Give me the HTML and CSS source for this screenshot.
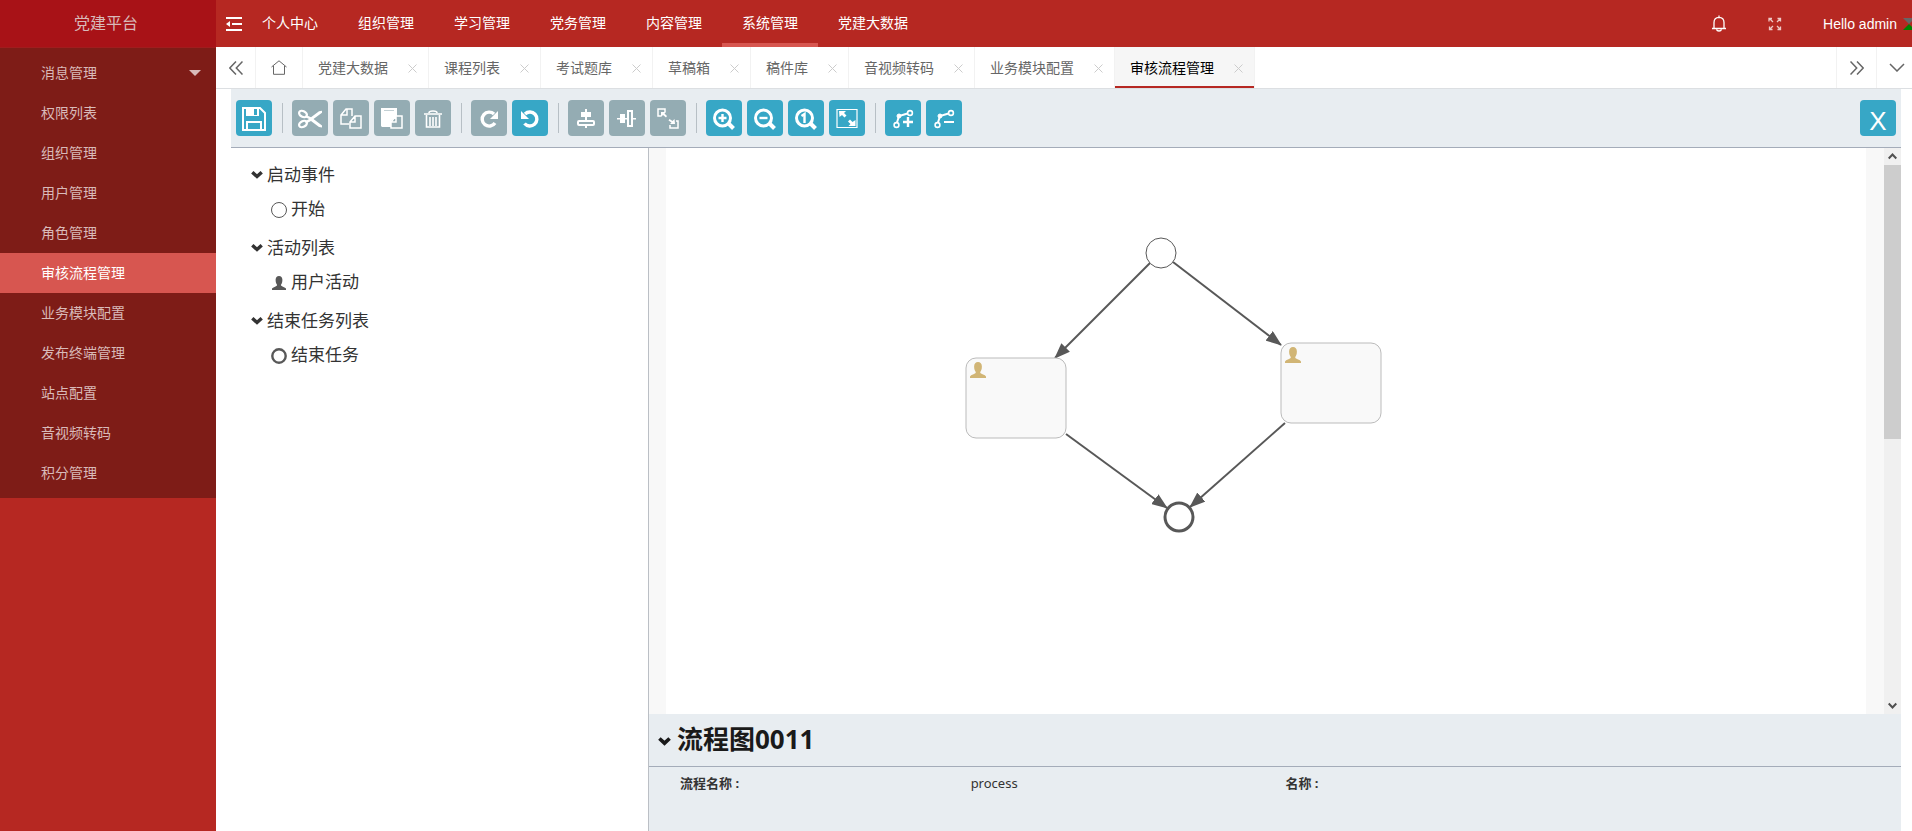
FILE: index.html
```html
<!DOCTYPE html>
<html lang="zh-CN">
<head>
<meta charset="utf-8">
<title>党建平台</title>
<link rel="stylesheet" href="styles.css">
</head>
<body>
<svg class="defs" aria-hidden="true">
  <defs>
    <symbol id="user" viewBox="0 0 16 16"><path d="M0 16v-1.600q.3-1 4-2.400 1.800-.7 1.800-1.400 0-.8-.8-1.800-.9-1.600-.9-4.400Q4.300.200 8 0q3.700.200 3.900 4.400 0 2.800-.9 4.400-.8 1-.8 1.800 0 .7 1.800 1.400 3.700 1.400 4 2.400V16z"/></symbol>
    <symbol id="chevron" viewBox="0 0 12 9"><path d="M1.300 2.200 6 6.500 10.700 2.200" fill="none" stroke="currentColor" stroke-width="3.400"/></symbol>
    <symbol id="cross" viewBox="0 0 9 9"><path d="M.5.5l8 8M8.500.5l-8 8" fill="none" stroke="currentColor"/></symbol>
  </defs>
</svg>
<div class="app">
  <aside class="sidebar">
    <div class="logo">党建平台</div>
    <nav class="menu">
      <a href="#" class="has-sub">消息管理<span class="caret"></span></a>
      <a href="#">权限列表</a>
      <a href="#">组织管理</a>
      <a href="#">用户管理</a>
      <a href="#">角色管理</a>
      <a href="#" class="active">审核流程管理</a>
      <a href="#">业务模块配置</a>
      <a href="#">发布终端管理</a>
      <a href="#">站点配置</a>
      <a href="#">音视频转码</a>
      <a href="#">积分管理</a>
    </nav>
  </aside>
  <div class="body">
    <header class="topbar">
      <button class="fold" aria-label="收起菜单"><svg width="16" height="14" viewBox="0 0 16 14"><path d="M0 1h16M6 7h10M0 13h16" stroke="currentColor" stroke-width="2"/><path d="M0 7l4-3v6z" fill="currentColor"/></svg></button>
      <nav class="topnav">
        <a href="#">个人中心</a><a href="#">组织管理</a><a href="#">学习管理</a><a href="#">党务管理</a><a href="#">内容管理</a><a href="#" class="active">系统管理</a><a href="#">党建大数据</a>
      </nav>
      <div class="tools">
        <button aria-label="消息"><svg width="16" height="18" viewBox="0 0 16 18"><path d="M1 13.500h14M3 13V7.500Q3 2.500 8 2.300q5 .2 5 5.200V13M8 .5v2M5.500 14.500Q6 16 8 16t2.500-1.500" fill="none" stroke="currentColor" stroke-width="1.300"/></svg></button>
        <button aria-label="全屏"><svg width="14" height="14" viewBox="0 0 14 14"><path d="M1 4.500V1.500h3M1.500 1.500l3.500 3.500M9.500 1.500h3v3M12.500 1.500L9 5M1.500 9.500v3h3M1.500 12.500L5 9M9.500 12.500h3v-3M12.500 12.500L9 9" fill="none" stroke="#efc8c6" stroke-width="1.300"/></svg></button>
        <a href="#" class="account">Hello admin</a>
        <svg class="status" width="9" height="12" viewBox="0 0 9 12"><path d="M0 0h9v3L6 6z" fill="#666"/><path d="M0 12L6 6l3 3v3z" fill="#008000"/></svg>
      </div>
    </header>
    <div class="tabs">
      <button class="step" aria-label="向左"><svg width="14" height="14" viewBox="0 0 14 14"><path d="M7 .5L.8 7 7 13.500M13.500.5L7.300 7l6.200 6.500" fill="none" stroke="currentColor" stroke-width="1.500"/></svg></button>
      <button class="home" aria-label="首页"><svg width="16" height="15" viewBox="0 0 16 15"><path d="M.5 7L8 .8 15.500 7M2.500 6v8.300h11V6" fill="none" stroke="currentColor"/></svg></button>
      <div class="tab"><a href="#">党建大数据</a><button aria-label="关闭"><svg><use href="#cross"/></svg></button></div>
      <div class="tab"><a href="#">课程列表</a><button aria-label="关闭"><svg><use href="#cross"/></svg></button></div>
      <div class="tab"><a href="#">考试题库</a><button aria-label="关闭"><svg><use href="#cross"/></svg></button></div>
      <div class="tab"><a href="#">草稿箱</a><button aria-label="关闭"><svg><use href="#cross"/></svg></button></div>
      <div class="tab"><a href="#">稿件库</a><button aria-label="关闭"><svg><use href="#cross"/></svg></button></div>
      <div class="tab"><a href="#">音视频转码</a><button aria-label="关闭"><svg><use href="#cross"/></svg></button></div>
      <div class="tab"><a href="#">业务模块配置</a><button aria-label="关闭"><svg><use href="#cross"/></svg></button></div>
      <div class="tab active"><a href="#">审核流程管理</a><button aria-label="关闭"><svg><use href="#cross"/></svg></button></div>
      <button class="step right" aria-label="向右"><svg width="14" height="14" viewBox="0 0 14 14"><path d="M.5.5L6.700 7 .5 13.500M7 .5L13.200 7 7 13.500" fill="none" stroke="currentColor" stroke-width="1.500"/></svg></button>
      <button class="step last" aria-label="更多"><svg width="16" height="9" viewBox="0 0 16 9"><path d="M1 1l7 7 7-7" fill="none" stroke="currentColor" stroke-width="1.500"/></svg></button>
    </div>
    <main class="editor">
      <div class="toolbar">
        <button aria-label="保存"><svg viewBox="0 0 36 36"><path d="M7 8h17l5 5v17H7z" fill="none" stroke="#fff" stroke-width="2"/><path d="M10 7h13v9H10z" fill="#fff"/><path d="M18 9h3v6h-3z" fill="#37a7c6"/><path d="M11 30v-8h14v8" fill="none" stroke="#fff" stroke-width="2"/></svg></button>
        <i></i>
        <button class="off" aria-label="剪切"><svg viewBox="0 0 36 36"><g fill="none" stroke="#fff" stroke-width="2.200"><ellipse cx="11" cy="14" rx="4.200" ry="2.800" transform="rotate(28 11 14)"/><ellipse cx="11" cy="24" rx="4.200" ry="2.800" transform="rotate(-28 11 24)"/></g><path d="M14 15l5 2.300 8-6 3-.5v2L21.500 19l8.500 6.500v2l-3-.5-8-6-5 2.500-1-2 4-2.500-4-2z" fill="#fff"/></svg></button>
        <button class="off" aria-label="复制"><svg viewBox="0 0 36 36" fill="none" stroke="#fff" stroke-width="1.500"><path d="M16 24H8v-9l5-6h6v7M14 9v6H8M17 22l5-6h6v12H17zM22 16v6h-5"/></svg></button>
        <button class="off" aria-label="粘贴"><svg viewBox="0 0 36 36"><path d="M7 8h16v8l-6 5v6H8l-1-1z" fill="#fff"/><path d="M10 10.500h10" stroke="#c3d0d4"/><path d="M17 22l5-6h6v12H17zM22 16v6h-5" fill="#94acb3" stroke="#fff" stroke-width="1.500"/></svg></button>
        <button class="off" aria-label="删除"><svg viewBox="0 0 36 36" fill="none" stroke="#fff" stroke-width="1.600"><path d="M9 14h18M14 13q0-2 4-2t4 2M11.500 15v12h13V15M15 17v9M18 17v9M21 17v9"/></svg></button>
        <i></i>
        <button class="off" aria-label="重做"><svg viewBox="0 0 36 36"><path d="M24 23a7 7 0 1 1-1-9" fill="none" stroke="#fff" stroke-width="3.400"/><path d="M27 11v8h-8z" fill="#fff"/></svg></button>
        <button aria-label="撤销"><svg viewBox="0 0 36 36"><path d="M12.500 23.500a7 7 0 1 0 .5-9.500" fill="none" stroke="#fff" stroke-width="3.400"/><path d="M9 11v8h8z" fill="#fff"/></svg></button>
        <i></i>
        <button class="off" aria-label="垂直对齐"><svg viewBox="0 0 36 36"><path d="M17 9h2v19h-2zM13 12h10v5H13z" fill="#fff"/><rect x="10" y="21" width="16" height="4" rx="1" fill="#94acb3" stroke="#fff" stroke-width="2"/></svg></button>
        <button class="off" aria-label="水平对齐"><svg viewBox="0 0 36 36"><path d="M8 18h19v1.500H8zM11 14h5v9h-5z" fill="#fff"/><rect x="19" y="11" width="4" height="15" fill="#94acb3" stroke="#fff" stroke-width="2"/></svg></button>
        <button class="off" aria-label="同尺寸"><svg viewBox="0 0 36 36"><path d="M11 16H8V9h7v3M26 21h2v7h-8v-3" fill="none" stroke="#fff" stroke-width="1.500"/><path d="M11 12h5l-1.500 1.500L17 16l-1 1.500-3-2.500-2 2zM25 24h-5l1.500-1.500-3-2 1-1.500 3 2 2-2z" fill="#fff"/></svg></button>
        <i></i>
        <button aria-label="放大"><svg viewBox="0 0 36 36" fill="none" stroke="#fff"><circle cx="16.500" cy="18" r="8" stroke-width="3"/><path d="M22.500 23.500l5 5" stroke-width="4"/><path d="M12.500 18h8M16.500 14v8" stroke-width="2.400"/></svg></button>
        <button aria-label="缩小"><svg viewBox="0 0 36 36" fill="none" stroke="#fff"><circle cx="16.500" cy="18" r="8" stroke-width="3"/><path d="M22.500 23.500l5 5" stroke-width="4"/><path d="M12.500 18h8" stroke-width="2.400"/></svg></button>
        <button aria-label="实际大小"><svg viewBox="0 0 36 36" fill="none" stroke="#fff"><circle cx="16.500" cy="18" r="8" stroke-width="3"/><path d="M22.500 23.500l5 5" stroke-width="4"/><path d="M13.500 16l3-2v9" stroke-width="2.400"/></svg></button>
        <button aria-label="适应窗口"><svg viewBox="0 0 36 36"><path d="M8 9.500h20v18H8z" fill="none" stroke="#fff" stroke-width="1.200"/><path d="M10 11h7l-2 2 2.500 2.500-2 2L13 15l-2.500 2zM26.500 26h-7l2-2-2.500-2.500 2-2 2.500 2.500 3-2z" fill="#fff"/></svg></button>
        <i></i>
        <button aria-label="添加拐点"><svg viewBox="0 0 36 36" fill="none" stroke="#fff"><circle cx="11.500" cy="25" r="2.400" stroke-width="1.600"/><circle cx="25" cy="13" r="2.400" stroke-width="1.600"/><path d="M12 22.500L14 16l8.500-2.500" stroke-width="2"/><circle cx="14" cy="16" r="2" fill="#fff"/><path d="M18 22h10M23 17v10" stroke-width="2.400"/></svg></button>
        <button aria-label="删除拐点"><svg viewBox="0 0 36 36" fill="none" stroke="#fff"><circle cx="11.500" cy="25" r="2.400" stroke-width="1.600"/><circle cx="25" cy="13" r="2.400" stroke-width="1.600"/><path d="M12 22.500L14 16l8.500-2.500" stroke-width="2"/><circle cx="14" cy="16" r="2" fill="#fff"/><path d="M18 22h10" stroke-width="2"/></svg></button>
        <button class="close">X</button>
      </div>
      <div class="work">
        <section class="palette">
          <h2><svg><use href="#chevron"/></svg>启动事件</h2>
          <p><svg viewBox="0 0 16 16"><circle cx="8" cy="8" r="7.500" fill="none" stroke="#585858"/></svg>开始</p>
          <h2><svg><use href="#chevron"/></svg>活动列表</h2>
          <p><svg class="person"><use href="#user"/></svg>用户活动</p>
          <h2><svg><use href="#chevron"/></svg>结束任务列表</h2>
          <p><svg viewBox="0 0 16 16"><circle cx="8" cy="8" r="6.700" fill="none" stroke="#585858" stroke-width="2.400"/></svg>结束任务</p>
        </section>
        <section class="stage">
          <div class="canvas">
            <div class="sheet">
              <svg class="flow" width="600" height="400" viewBox="0 0 600 400">
                <defs><marker id="arrow" viewBox="0 0 16 12" refX="15" refY="6" markerWidth="16" markerHeight="12" markerUnits="userSpaceOnUse" orient="auto"><path d="M0 0l16 6-16 6z" fill="#585858"/></marker></defs>
                <g fill="none" stroke="#585858" stroke-width="2">
                  <path d="M484 115L389 210" marker-end="url(#arrow)"/>
                  <path d="M507 114L615 197" marker-end="url(#arrow)"/>
                  <path d="M400 286L501 360" marker-end="url(#arrow)"/>
                  <path d="M619 275L524 359" marker-end="url(#arrow)"/>
                </g>
                <circle cx="495" cy="105" r="15" fill="#fff" stroke="#585858"/>
                <circle cx="513" cy="369" r="14" fill="#fff" stroke="#585858" stroke-width="3"/>
                <g fill="#f9f9f9" stroke="#bbb"><rect x="300" y="210" width="100" height="80" rx="10"/><rect x="615" y="195" width="100" height="80" rx="10"/></g>
                <g fill="#d1b575"><use href="#user" x="304" y="214" width="16" height="16"/><use href="#user" x="619" y="199" width="16" height="16"/></g>
              </svg>
            </div>
            <div class="scroll"><svg width="9" height="17" viewBox="0 0 9 17"><path d="M.7 10.500l3.800-4 3.800 4" fill="none" stroke="#505050" stroke-width="2"/></svg><span></span><svg width="9" height="17" viewBox="0 0 9 17"><path d="M.7 6.500l3.800 4 3.800-4" fill="none" stroke="#505050" stroke-width="2"/></svg></div>
          </div>
          <div class="props">
            <h1><svg><use href="#chevron"/></svg>流程图0011</h1>
            <dl><dt>流程名称 :</dt><dd>process</dd><dt>名称 :</dt><dd></dd></dl>
          </div>
        </section>
      </div>
    </main>
  </div>
</div>
</body>
</html>
```

FILE: styles.css
```css
* { box-sizing: border-box; }
body {
  margin: 0;
  font: 14px/20px "Liberation Sans", "Noto Sans CJK SC", sans-serif;
  color: #333;
  background: #fff;
  overflow: hidden;
}
a { color: inherit; text-decoration: none; }
button { padding: 0; border: 0; background: none; color: inherit; font: inherit; }
svg { display: block; flex: none; }
h1, h2, p, dl, dd { margin: 0; }
.defs { position: absolute; width: 0; height: 0; }
.app { display: flex; height: 100vh; }

.sidebar { flex: none; width: 216px; background: #b62822; color: #d9bab9; }
.logo {
  height: 48px;
  padding-right: 4px;
  border-bottom: 1px solid #a01d1e;
  background: #a81217;
  font-size: 16px;
  line-height: 47px;
  text-align: center;
}
.menu { padding: 5px 0; background: #7e1c17; }
.menu a { display: flex; align-items: center; justify-content: space-between; height: 40px; padding: 0 15px 0 41px; }
.menu .active { background: #d75650; color: #fff; }
.caret { border: 6px solid transparent; border-top-color: #d9bab9; border-bottom: 0; }

.body { flex: 1; min-width: 0; display: flex; flex-direction: column; }
.topbar { flex: none; display: flex; height: 47px; background: #b62822; color: #fff; }
.fold { padding-left: 10px; }
.topnav { display: flex; }
.topnav a { padding: 0 20px; line-height: 47px; }
.topnav .active { border-bottom: 4px solid #d75650; }
.tools { display: flex; align-items: center; margin-left: auto; }
.tools button { width: 56px; display: grid; place-items: center; }
.account { padding: 0 6px 0 20px; }

.tabs { flex: none; display: flex; height: 42px; border-bottom: 1px solid #dcdfe2; color: #666; }
.tabs > * { border-right: 1px solid #f2f2f2; }
.step, .home { width: 40px; display: grid; place-items: center; }
.home { width: 47px; }
.right { width: 41px; margin-left: auto; border-left: 1px solid #f2f2f2; }
.last { width: 35px; padding-right: 3px; padding-left: 8px; border: 0; }
.tab { display: flex; align-items: center; padding: 0 11px 0 15px; }
.tab button { width: 30px; height: 20px; padding: 2px 0 0 20px; margin-right: -1px; color: #ccc; }
.tab svg { width: 9px; height: 9px; }
.tab.active { background: #f6f6f6; color: #000; box-shadow: inset 0 -2px #b62822; }

.editor { flex: 1; min-height: 0; display: flex; flex-direction: column; margin: 0 11px 0 15px; }
.toolbar {
  flex: none;
  display: flex;
  align-items: center;
  gap: 5px;
  height: 59px;
  padding: 0 5px;
  border-bottom: 1px solid #a4acb9;
  background: #e8edf1;
}
.toolbar button { width: 36px; height: 36px; border-radius: 4px; background: #37a7c6; }
.toolbar .off { background: #94acb3; }
.toolbar i { width: 1px; height: 30px; margin: 0 4px 0 5px; background: #b7bfc5; }
.toolbar .close { margin-left: auto; padding-top: 7px; color: #fff; font-size: 26px; line-height: 29px; }
.work { flex: 1; min-height: 0; display: flex; }

.palette { flex: none; width: 417px; padding: 9px 20px; color: #333; font-family: "Noto Sans CJK SC", sans-serif; font-size: 17px; }
.palette h2 { display: flex; align-items: center; gap: 4px; height: 34px; font-size: 17px; font-weight: 400; }
.palette h2 svg { width: 12px; height: 9px; }
.palette p { display: flex; align-items: center; gap: 4px; height: 34px; margin-bottom: 5px; padding-left: 20px; }
.palette p svg { width: 16px; height: 16px; margin-top: 4px; }
.palette .person { fill: #585858; height: 14px; }

.stage { flex: 1; min-width: 0; display: flex; flex-direction: column; border-left: 1px solid #bbbfc5; }
.canvas { flex: 1; min-height: 0; display: flex; background: #f8f8f8; }
.sheet { flex: 1; margin: 0 18px 0 17px; background: #fff; }
.flow { overflow: visible; }
.scroll { flex: none; width: 17px; display: flex; flex-direction: column; align-items: center; background: #f0f0f0; }
.scroll span { width: 17px; height: 274px; margin-bottom: auto; background: #cdcdcd; }

.props { flex: none; height: 117px; background: #e8edf1; font-family: "Noto Sans", "Noto Sans CJK SC", sans-serif; }
.props h1 {
  display: flex;
  align-items: center;
  gap: 6px;
  height: 53px;
  padding: 0 9px 2px;
  border-bottom: 1px solid #a4acb9;
  color: #1a1a1a;
  font: 700 26px/30px "Noto Sans", "Noto Sans CJK SC", sans-serif;
}
.props h1 svg { width: 13px; height: 10px; margin-top: 4px; }
.props dl { display: grid; grid-template-columns: 24% 26% 24% 26%; padding: 6px 10px 0 31px; font-size: 13px; }
.props dt { font-weight: 700; }
```
